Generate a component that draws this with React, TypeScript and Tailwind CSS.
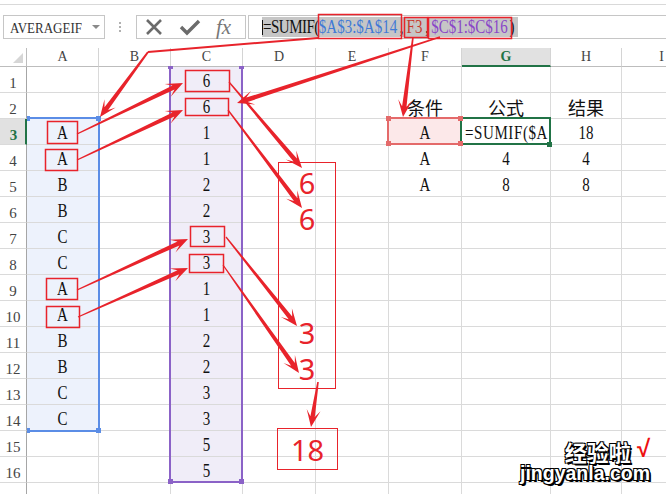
import React from "react";

const RED = "#e8232b";

function arrowPts(x1: number, y1: number, x2: number, y2: number, w0 = 1.2, w1 = 4.5, L = 17, W = 7): string {
  const dx = x2 - x1;
  const dy = y2 - y1;
  const len = Math.hypot(dx, dy);
  const ux = dx / len;
  const uy = dy / len;
  const nx = -uy;
  const ny = ux;
  const nb = L * 0.62;
  const Nx = x2 - ux * nb;
  const Ny = y2 - uy * nb;
  const Bx = x2 - ux * L;
  const By = y2 - uy * L;
  const pts: [number, number][] = [
    [x1 + (nx * w0) / 2, y1 + (ny * w0) / 2],
    [Nx + (nx * w1) / 2, Ny + (ny * w1) / 2],
    [Bx + nx * W, By + ny * W],
    [x2, y2],
    [Bx - nx * W, By - ny * W],
    [Nx - (nx * w1) / 2, Ny - (ny * w1) / 2],
    [x1 - (nx * w0) / 2, y1 - (ny * w0) / 2],
  ];
  return pts.map((p) => p.map((v) => v.toFixed(1)).join(",")).join(" ");
}

const arrows: [number, number, number, number, number?][] = [
  [148, 52, 100, 117, 2],
  [413, 37, 403, 117, 1.6],
  [440, 37, 237, 103, 1.4],
  [77, 134, 183, 83],
  [77, 160, 183, 110],
  [77, 290, 188, 239],
  [78, 317, 188, 268],
  [229, 82, 302, 168],
  [228, 110, 302, 208],
  [226, 237, 297, 326],
  [223, 265, 299, 373],
  [318, 382, 311, 427, 1.6],
];

const boxes: [number, number, number, number][] = [
  [318, 14, 83, 24],
  [404, 17, 23, 20],
  [428, 17, 83, 21],
  [47, 121, 30, 22],
  [45, 149, 32, 21],
  [46, 278, 31, 21],
  [46, 306, 33, 21],
  [185, 70, 44, 21],
  [185, 98, 43, 17],
  [190, 226, 34, 20],
  [189, 254, 34, 18],
];

const colLetters = ["A", "B", "C", "D", "E", "F", "G", "H", "I"];
const rows = Array.from({ length: 17 }, (_, i) => i + 1);
const colA: Record<number, string> = { 3: "A", 4: "A", 5: "B", 6: "B", 7: "C", 8: "C", 9: "A", 10: "A", 11: "B", 12: "B", 13: "C", 14: "C" };
const colC = [6, 6, 1, 1, 2, 2, 3, 3, 1, 1, 2, 2, 3, 3, 5, 5];
const table: Record<string, string> = {
  F3: "A", H3: "18",
  F4: "A", G4: "4", H4: "4",
  F5: "A", G5: "8", H5: "8",
};
const cjk: Record<string, string> = { F2: "条件", G2: "公式", H2: "结果" };

function Serif({ children }: { children: React.ReactNode }) {
  return (
    <span className="inline-block scale-y-[1.25] font-['Liberation_Serif',serif] text-[15px] leading-none text-[#111] whitespace-nowrap">
      {children}
    </span>
  );
}

function Cell({ r, ci }: { r: number; ci: number }) {
  const l = colLetters[ci];
  const key = `${l}${r}`;
  let bg = "";
  if (ci === 0 && r >= 3 && r <= 14) bg = "bg-[#edf2fc]";
  if (ci === 2 && r >= 1 && r <= 16) bg = "bg-[#f0edf8]";
  if (key === "F3") bg = "bg-[#fce8e9]";
  let content: React.ReactNode = null;
  if (ci === 0 && colA[r]) content = <Serif>{colA[r]}</Serif>;
  if (ci === 2 && r <= 16) content = <Serif>{colC[r - 1]}</Serif>;
  if (table[key]) content = <Serif>{table[key]}</Serif>;
  if (key === "G3")
    content = (
      <span className="inline-block scale-y-[1.25] font-['Liberation_Serif',serif] text-[15px] tracking-[0.6px] leading-none text-[#111] whitespace-nowrap">
        =SUMIF($A
      </span>
    );
  if (cjk[key])
    content = (
      <span className="font-['Noto_Sans_CJK_SC',sans-serif] text-[18px] leading-none text-[#111]">{cjk[key]}</span>
    );
  const align = key === "G3" ? "justify-start pl-[3px]" : "justify-center";
  return (
    <div className={`h-[26px] border-b border-r border-[#dadada] flex items-center pt-[3px] overflow-hidden ${align} ${bg}`}>
      {content}
    </div>
  );
}

const WM_SHADOW =
  "[text-shadow:1px_1px_0_#000,-1px_-1px_0_#000,1px_-1px_0_#000,-1px_1px_0_#000,2px_2px_0_#000]";

export default function App() {
  return (
    <div className="relative w-[666px] h-[494px] overflow-hidden bg-white">
      {/* toolbar */}
      <div className="h-[4px]" />
      <div className="h-[44px] border-t border-[#d9d9d9] flex items-start pt-[10px]">
        <div className="ml-[3px] shrink-0 w-[102px] h-[24px] border border-[#c6c6c6] flex items-center pl-[6px]">
          <span className="inline-block scale-y-[1.15] font-['Liberation_Serif',serif] text-[13px] leading-none text-[#333]">
            AVERAGEIF
          </span>
          <span className="ml-auto mr-[4px] w-0 h-0 border-l-[4px] border-r-[4px] border-t-[4px] border-l-transparent border-r-transparent border-t-[#8a8a8a]" />
        </div>
        <div className="ml-[14px] shrink-0 h-[24px] flex flex-col items-center justify-center gap-[2px]">
          <span className="w-[2px] h-[2px] bg-[#b0b0b0]" />
          <span className="w-[2px] h-[2px] bg-[#b0b0b0]" />
          <span className="w-[2px] h-[2px] bg-[#b0b0b0]" />
        </div>
        <div className="ml-[15px] shrink-0 w-[110px] h-[24px] border border-[#c6c6c6] flex items-center">
          <svg width="18" height="18" viewBox="0 0 18 18" className="ml-[8px]">
            <path d="M2 2 L16 16 M16 2 L2 16" stroke="#6b6b6b" strokeWidth="2.6" fill="none" />
          </svg>
          <svg width="22" height="18" viewBox="0 0 22 18" className="ml-[16px]">
            <path d="M2 9 L8 15 L20 3" stroke="#6b6b6b" strokeWidth="3.4" fill="none" />
          </svg>
          <span className="ml-[15px] font-['Liberation_Serif',serif] italic text-[21px] leading-none text-[#777]">fx</span>
        </div>
        <div className="ml-[2px] shrink-0 w-[430px] h-[24px] border border-[#c6c6c6] flex items-center">
          <div className="ml-[13px] h-[20px] flex items-center bg-[#c6c6c6] pr-[3px]">
            <span className="w-[1px] h-[15px] bg-[#111]" />
            <span className="inline-flex scale-y-[1.25] font-['Liberation_Serif',serif] text-[15px] leading-none whitespace-pre">
              <span className="inline-block w-[55px] text-center tracking-[-0.5px] text-[#111]">=SUMIF(</span>
              <span className="inline-block w-[80px] text-center text-[#3f7ad6]">$A$3:$A$14</span>
              <span className="inline-block w-[7px] text-center text-[#111]">,</span>
              <span className="inline-block w-[19px] text-center text-[#c83a2e]">F3</span>
              <span className="inline-block w-[6px] text-center text-[#111]">,</span>
              <span className="inline-block w-[79px] text-center text-[#8a46c8]">$C$1:$C$16</span>
              <span className="inline-block w-[6px] text-center text-[#111]">)</span>
            </span>
          </div>
        </div>
      </div>

      {/* sheet grid */}
      <div className="grid grid-cols-[27px_72px_72px_72px_73px_73px_73px_89px_71px_80px]">
        <div className="h-[19px] border-r border-b border-[#bdbdbd] flex items-end justify-end pr-[3px] pb-[3px]">
          <span className="w-0 h-0 border-l-[10px] border-l-transparent border-b-[10px] border-b-[#d6d6d6]" />
        </div>
        {colLetters.map((l) =>
          l === "G" ? (
            <div key={l} className="h-[19px] bg-[#e1e1e1] border-b-2 border-b-[#217346] border-r border-r-[#d4d4d4] flex items-center justify-center">
              <span className="inline-block scale-y-[1.1] font-['Liberation_Serif',serif] font-bold text-[14px] leading-none text-[#217346]">{l}</span>
            </div>
          ) : (
            <div key={l} className="h-[19px] border-b border-b-[#bdbdbd] border-r border-r-[#d4d4d4] flex items-center justify-center">
              <span className="inline-block scale-y-[1.1] font-['Liberation_Serif',serif] text-[14px] leading-none text-[#444]">{l}</span>
            </div>
          )
        )}
        {rows.map((r) => (
          <React.Fragment key={r}>
            {r === 3 ? (
              <div className="h-[26px] bg-[#e1e1e1] border-b border-b-[#dadada] border-r-2 border-r-[#217346] flex items-end justify-center pl-[2px] pb-[1px]">
                <span className="font-['Liberation_Serif',serif] font-bold text-[15px] leading-none text-[#217346]">{r}</span>
              </div>
            ) : (
              <div className="h-[26px] border-b border-b-[#dadada] border-r border-r-[#a6a6a6] flex items-end justify-center pb-[1px]">
                <span className="font-['Liberation_Serif',serif] text-[15px] leading-none text-[#444]">{r <= 16 ? r : ""}</span>
              </div>
            )}
            {colLetters.map((l, ci) => (
              <Cell key={l} r={r} ci={ci} />
            ))}
          </React.Fragment>
        ))}
      </div>

      {/* selection: A3:A14 */}
      <div className="absolute left-[27px] top-[117px] w-[73px] h-[315px] border-t-2 border-r-2 border-b-2 border-[#5b8de6]">
        <span className="absolute -right-[3px] -top-[3px] w-[5px] h-[5px] bg-[#5b8de6]" />
        <span className="absolute -right-[3px] -bottom-[3px] w-[5px] h-[5px] bg-[#5b8de6]" />
        <span className="absolute left-0 -top-[3px] w-[3px] h-[5px] bg-[#5b8de6]" />
        <span className="absolute left-0 -bottom-[3px] w-[3px] h-[5px] bg-[#5b8de6]" />
      </div>

      {/* selection: C1:C16 */}
      <div className="absolute left-[169px] top-[67px] w-[74px] h-[416px] border-l-2 border-r-2 border-b-2 border-[#8b62c7]">
        <span className="absolute -left-[3px] -bottom-[3px] w-[5px] h-[5px] bg-[#8b62c7]" />
        <span className="absolute -right-[3px] -bottom-[3px] w-[5px] h-[5px] bg-[#8b62c7]" />
        <span className="absolute -left-[3px] -top-[1px] w-[5px] h-[3px] bg-[#8b62c7]" />
        <span className="absolute -right-[3px] -top-[1px] w-[5px] h-[3px] bg-[#8b62c7]" />
      </div>

      {/* F3 reference + G3 active cell */}
      <div className="absolute left-[387px] top-[117px] w-[75px] h-[28px] border-2 border-[#e46a6a]" />
      <div className="absolute left-[460px] top-[117px] w-[91px] h-[28px] border-2 border-[#217346]">
        <span className="absolute -right-[3px] -bottom-[4px] w-[5px] h-[5px] bg-[#217346]" />
      </div>
      <div className="absolute left-[386px] top-[116px] w-[77px] h-[30px]">
        <span className="absolute left-0 top-0 w-[5px] h-[5px] bg-[#e46a6a]" />
        <span className="absolute left-0 bottom-0 w-[5px] h-[5px] bg-[#e46a6a]" />
        <span className="absolute right-0 top-0 w-[5px] h-[5px] bg-[#e46a6a]" />
        <span className="absolute right-0 bottom-0 w-[5px] h-[5px] bg-[#e46a6a]" />
      </div>

      {/* red annotation boxes with numbers */}
      <div className="absolute left-[278px] top-[162px] w-[58px] h-[227px] border-[1.5px] border-[#e8232b] flex flex-col items-center pt-[5px] font-['Noto_Sans',sans-serif] text-[29px] leading-none text-[#e8232b]">
        <span>6</span>
        <span className="mt-[7px]">6</span>
        <span className="mt-[85px]">3</span>
        <span className="mt-[7px]">3</span>
      </div>
      <div className="absolute left-[277px] top-[428px] w-[61px] h-[42px] border-[1.5px] border-[#e8232b] flex items-center justify-center font-['Noto_Sans',sans-serif] text-[29px] leading-none text-[#e8232b]">
        18
      </div>

      {/* red arrows */}
      <svg className="absolute left-0 top-0 pointer-events-none" width="666" height="494" viewBox="0 0 666 494">
        {boxes.map(([x, y, w, h], i) => (
          <rect key={i} x={x + 0.5} y={y + 0.5} width={w} height={h} fill="none" stroke={RED} strokeWidth="1.5" />
        ))}
        <polyline points="318,38 148,52" fill="none" stroke={RED} strokeWidth="2" />
        {arrows.map(([x1, y1, x2, y2, w0], i) => (
          <polygon key={i} points={arrowPts(x1, y1, x2, y2, w0 ?? 1.2)} fill={RED} />
        ))}
      </svg>

      {/* watermark */}
      <div className="absolute left-[520px] top-[440px] flex flex-col items-end">
        <div className="flex items-start h-[22px]">
          <span className={`font-['Noto_Sans_CJK_SC',sans-serif] font-bold text-[22px] leading-[22px] text-white ${WM_SHADOW}`}>经验啦</span>
          <span className="ml-[6px] -mt-[2px] font-['Liberation_Sans',sans-serif] font-bold text-[24px] leading-[22px] text-[#ee1111]">√</span>
        </div>
        <span className={`mt-[1px] font-['Liberation_Sans',sans-serif] font-bold text-[19.5px] leading-[21px] text-white ${WM_SHADOW}`}>
          jingyanla.com
        </span>
      </div>
    </div>
  );
}
